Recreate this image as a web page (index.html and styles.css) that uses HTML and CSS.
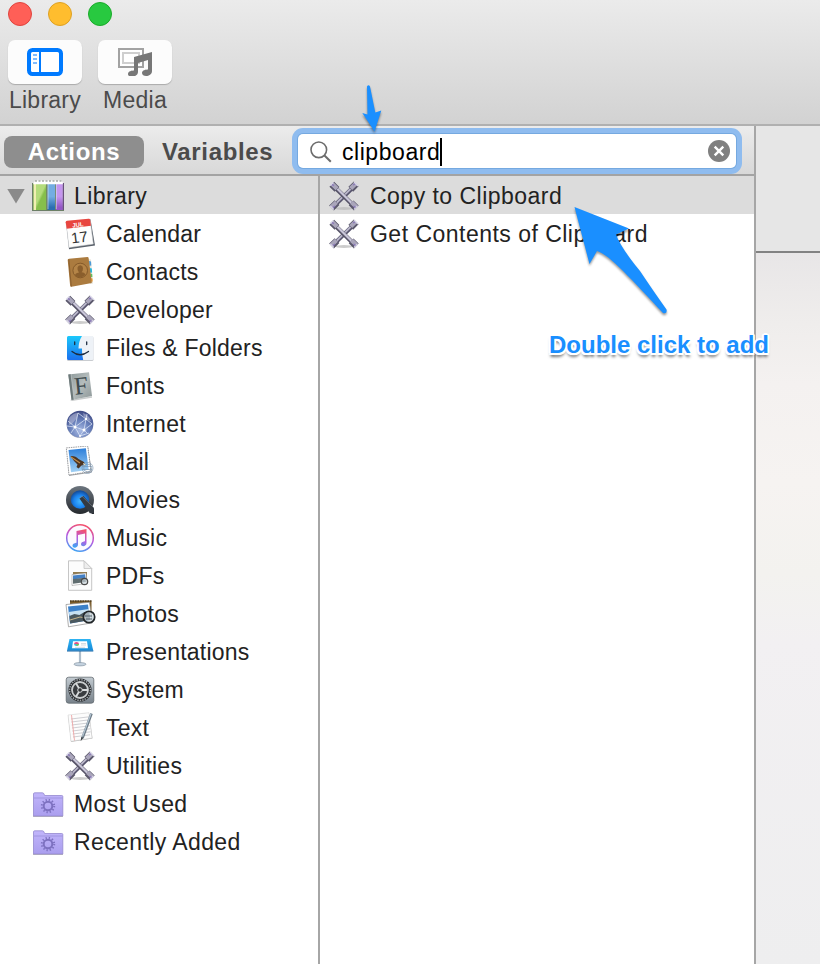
FILE: index.html
```html
<!DOCTYPE html>
<html lang="en">
<head>
<meta charset="utf-8">
<title>Automator</title>
<link rel="stylesheet" href="styles.css">
</head>
<body>
<svg class="defs" aria-hidden="true">
  <defs>
    <linearGradient id="green" x1="0" y1="0" x2="1" y2="1"><stop offset=".5" stop-color="#b4dc7c"/><stop offset=".6" stop-color="#86bf4c"/></linearGradient>
    <linearGradient id="blue" x1="0" y1="0" x2="0" y2="1"><stop offset=".5" stop-color="#73ade2"/><stop offset=".9" stop-color="#2b6eb2"/></linearGradient>
    <linearGradient id="purple" x1="0" y1="0" x2="0" y2="1"><stop offset=".5" stop-color="#c596ee"/><stop offset=".9" stop-color="#9557c6"/></linearGradient>
    <linearGradient id="finder" x1="0" y1="0" x2="0" y2="1"><stop offset="0" stop-color="#1bc8fb"/><stop offset="1" stop-color="#1b70ef"/></linearGradient>
    <linearGradient id="book" x1="0" y1="0" x2="1" y2="1"><stop offset="0" stop-color="#8b9798"/><stop offset=".5" stop-color="#b5bdbd"/><stop offset="1" stop-color="#8c9697"/></linearGradient>
    <radialGradient id="globe" cx=".5" cy=".75" r=".75"><stop offset="0" stop-color="#a9bbe4"/><stop offset=".5" stop-color="#6880bb"/><stop offset="1" stop-color="#3f4a83"/></radialGradient>
    <linearGradient id="sky" x1="0" y1="0" x2="0" y2="1"><stop offset="0" stop-color="#2d7fda"/><stop offset="1" stop-color="#a3d2f5"/></linearGradient>
    <linearGradient id="dark" x1="0" y1="0" x2="0" y2="1"><stop offset="0" stop-color="#6c757e"/><stop offset="1" stop-color="#25292e"/></linearGradient>
    <radialGradient id="lens" cx=".5" cy=".6" r=".55"><stop offset="0" stop-color="#45b6ff"/><stop offset=".6" stop-color="#1a83ef"/><stop offset="1" stop-color="#154f9e"/></radialGradient>
    <linearGradient id="tune" x1=".6" y1="0" x2=".3" y2="1"><stop offset="0" stop-color="#f4506d"/><stop offset=".5" stop-color="#b55ae0"/><stop offset="1" stop-color="#3fa4f3"/></linearGradient>
    <linearGradient id="screen" x1="0" y1="0" x2="0" y2="1"><stop offset="0" stop-color="#2fb4f2"/><stop offset="1" stop-color="#168bd9"/></linearGradient>
    <linearGradient id="plate" x1="0" y1="0" x2="0" y2="1"><stop offset="0" stop-color="#c3cbd1"/><stop offset="1" stop-color="#77818a"/></linearGradient>
    <linearGradient id="folder" x1="0" y1="0" x2="0" y2="1"><stop offset="0" stop-color="#c1b5fb"/><stop offset="1" stop-color="#aa9eee"/></linearGradient>

    <symbol id="i-library" viewBox="0 0 32 32">
      <path d="M0 3h32v28h-32z" fill="#6c7f66"/>
      <path d="M1.500 3 3.500.5h26L31 3z" fill="#fff"/>
      <path d="M3 1h27" stroke="#7c837a" stroke-dasharray="2 1.500"/>
      <path d="M1.300 3h12.900v27h-12.900z" fill="url(#green)"/>
      <path d="M2 3h2v27h-2z" fill="#f1efb1"/>
      <path d="M15.700 3h7.300v27h-7.300z" fill="url(#blue)"/>
      <path d="M24 3h6.800v27h-6.800z" fill="url(#purple)"/>
      <path d="M16 3v26M24.300 3v26" stroke="#d8eafa" stroke-width=".6"/>
      <path d="M1.300 3.500h29.500" stroke="#fff" stroke-width="1.500"/>
      <path d="M31.500 3v27" stroke="#68517a"/>
    </symbol>
    <symbol id="i-calendar" viewBox="0 0 32 32">
      <path d="M2 4 26.500 1.200 31 27.500 5 31.200z" fill="#59606a"/>
      <path d="M2 4 26 1.200 29.300 26 5 29.500z" fill="#fdfdfd" stroke="#d0d2d5" stroke-width=".5"/>
      <path d="M1.700 4.300Q1.600 3 3 2.800L24.500.8Q26 .7 26.200 2L27 7.700 2.700 10.700z" fill="#e8453f"/>
      <text x="14" y="8.800" class="cal-month" transform="rotate(-6 14 8)">JUL</text>
      <text x="15.500" y="24.500" class="cal-day" transform="rotate(-7 15 20)">17</text>
    </symbol>
    <symbol id="i-contacts" viewBox="0 0 32 32">
      <path d="m24 3 3 .5 2 24-3 .5z" fill="#e7e4da"/>
      <path d="m25 5 2 .4.300 4-2 .3z" fill="#4d9bd8"/><path d="m25.800 12 2 .4.300 4-2 .3z" fill="#28b7dc"/><path d="m26.200 17.500 2 .4.200 3-2 .3z" fill="#67c05c"/><path d="m26.500 22 2 .4.200 3-2 .3z" fill="#ed9b36"/>
      <path d="M3.700 4Q3.600 3 5 2.800L23.500 1Q24.500 1 24.600 2L27.800 27 7.500 30.700Q6.300 31 6.100 29.500z" fill="#ab7b3f"/>
      <path d="m4.800 3.500 2.500 27" stroke="#82572a" stroke-width=".8"/>
      <circle cx="16.200" cy="14.500" r="7.300" fill="#b48447" stroke="#805627" stroke-width=".9"/>
      <path d="M11 19.500Q11 17 15 16.500q-2-2-1.500-5 1-2.500 3-2.300 2.500.3 2.500 3t-1.500 4q3.500.3 4 2.800-5 4.500-10.500.5z" fill="#8a5e2c"/>
    </symbol>
    <symbol id="i-tools" viewBox="0 0 32 32">
      <ellipse cx="16" cy="28.500" rx="9" ry="1.500" fill="#bbb" opacity=".75"/>
      <path d="M5 27 27 5.500" stroke="#55526c" stroke-width="4"/>
      <path d="M5 26.500 26.500 5" stroke="#b9b6c9" stroke-width="1.800"/>
      <path d="M5 5.500 27 27" stroke="#565367" stroke-width="4.400"/>
      <path d="M5.500 4.900 27 26.400" stroke="#c9c6d9" stroke-width="2.200"/>
      <g stroke="#5b586c" stroke-width="6.800"><path d="m3.500 28 5.500-5.400M22.800 9.200l5.400-5.300M3.800 4.300l5.200 5.100M23.100 22.900l5.200 5.100"/></g>
      <g stroke="#aaa6bb" stroke-width="4.200"><path d="m3.200 27.200 5.200-5M22.700 8.500l4.900-4.800M4 3.900l5.100 4.800M23.500 22.200l5 4.800"/></g>
      <path d="m2.300 5.500 3-3M26 2l4 4M2.300 26l3.500 3.500M26 29.500l3.500-3.500" stroke="#d8d5e8" stroke-width="1.200"/>
      <path d="m4 4.700 2 1M25 5l2-1M5 27.500l2-1.500M25.500 26l2 1.500" stroke="#8a78ba" stroke-width="1.300"/>
    </symbol>
    <symbol id="i-files" viewBox="0 0 32 32">
      <rect x="3" y="4.500" width="26.500" height="24.500" rx="1.500" fill="#c9ccd0"/>
      <rect x="3" y="4" width="26.500" height="24" rx="1.500" fill="#eef2f7"/>
      <path d="M4.500 4H18q-3.300 5-3.500 12.500h3.500q-.3 6 1.200 11.500H4.500Q3 28 3 26.500v-21Q3 4 4.500 4z" fill="url(#finder)"/>
      <path d="M10.700 10v2.500M22.700 10v2.500M8 19.500q8 6.500 16.500 0" fill="none" stroke="#1d2c40" stroke-width="1.300" stroke-linecap="round"/>
    </symbol>
    <symbol id="i-fonts" viewBox="0 0 32 32">
      <path d="m6 30 22-3.800v1.600L8 31z" fill="#c9cccc"/>
      <path d="M4.300 4.500 25 2.300 28 26 7.500 30z" fill="url(#book)"/>
      <path d="M4.300 4.500 7 4.200 10 29.500 7.500 30z" fill="#6d797a"/>
      <path d="M7 4.200 10 29.500" stroke="#ced4d4" stroke-width=".6"/>
      <text x="17" y="24" class="font-letter" transform="rotate(-6 17 16)">F</text>
    </symbol>
    <symbol id="i-internet" viewBox="0 0 32 32">
      <circle cx="16" cy="16.500" r="13.300" fill="#aeb3c2"/><circle cx="16" cy="16" r="13.300" fill="url(#globe)"/>
      <path d="M5 10q4-5 9-5l-1 5-5 6-3 1zM19 5q6 2 8 8l-3-1-4-3z" fill="#c6c8df" opacity=".5"/>
      <path d="m4 13 7 6 11-8 6 5-8 6-9-3 5 9 4-6 3 3M11 19 14 5l8 6 1-5M3 18l8 1-4 6M20 22l2-11M16 28l9-3" fill="none" stroke="#e7effc" stroke-width=".7"/>
      <g fill="#fff"><circle cx="11" cy="19" r="1.500"/><circle cx="22" cy="11" r="1.200"/><circle cx="20" cy="22" r="1.500"/><circle cx="16" cy="28" r="1"/></g>
    </symbol>
    <symbol id="i-mail" viewBox="0 0 32 32">
      <path d="M2.500 2.500 24 .5 28 26.500 5 30z" fill="#a6a9ad"/>
      <path d="M2.300 1.900 23.700 0 27 25.500 5 29z" fill="#fff" stroke="#85888c" stroke-width=".8" stroke-dasharray="1.500 .8"/>
      <path d="m4.500 4 17.400-1.800 2.800 21.500L7 26.300z" fill="url(#sky)"/>
      <path d="M6.500 10q5-.5 8 3l5.500 3 1.500 3-4 .5-3 3-2-1.500 1-2.500q-4-3.500-7-8.500z" fill="#4c3524"/>
      <path d="m7 11 6 4 3 2" stroke="#c48c46" stroke-width="1.200" fill="none"/><path d="m19 17 3 1-2 2z" fill="#eee4be"/>
      <g fill="none" stroke="#7793ae" stroke-width=".8" opacity=".8"><circle cx="23.500" cy="22" r="5.500"/><circle cx="23.500" cy="22" r="3.800"/><path d="M18 20.500h10M18 23.500h10"/></g>
    </symbol>
    <symbol id="i-movies" viewBox="0 0 32 32">
      <circle cx="16" cy="16" r="14" fill="url(#dark)"/><path d="M17 17 28 30h2v-5l-9-10z" fill="#292d32"/>
      <circle cx="16" cy="15.500" r="9.300" fill="url(#lens)"/>
      <path d="m15.500 14.500 4-2.500 10.300 12v5.300h-4z" fill="#343a41"/>
      <path d="m15.500 14.500 2.500-2.300L30 24" fill="none" stroke="#7b858e" stroke-width=".6"/>
    </symbol>
    <symbol id="i-music" viewBox="0 0 32 32">
      <circle cx="16" cy="16" r="13.300" fill="#fcfaff" stroke="url(#tune)" stroke-width="1.500"/>
      <path d="M12.500 9 22.500 7v14c0 3.800-5.500 4.100-5.500 1.200 0-2.300 3-2.700 4-3V11.500L14 13v9.500c0 3.800-5.500 4.100-5.500 1.200 0-2.300 3-2.700 4-3z" fill="url(#tune)"/>
    </symbol>
    <symbol id="i-pdfs" viewBox="0 0 32 32">
      <path d="M4.500.8H20l7.700 7.700v21.800H4.500z" fill="#fcfcfc" stroke="#b8b8b8" stroke-width=".8"/>
      <path d="M20 .8V8.500h7.700z" fill="#ededed" stroke="#c4c4c4" stroke-width=".8"/>
      <path d="M9 12h14v10H9z" fill="#927b4e"/><path d="M8 14.500 22 13l1 10.500-15 2z" fill="#fff" stroke="#8b8b8b" stroke-width=".5"/>
      <path d="M9 15.500 21 14.300l.5 4-12.500 1z" fill="#4580c4"/><path d="m9 19 12.500-1.200.4 4.200L9 23.700z" fill="#606d70"/>
      <circle cx="20.500" cy="21.500" r="3.200" fill="#cad4da" fill-opacity=".65" stroke="#494949" stroke-width="1.200"/>
    </symbol>
    <symbol id="i-photos" viewBox="0 0 32 32">
      <path d="M6 2.500h21.500V19H6z" fill="#7b5b28"/><path d="M6 3h21.500" stroke="#302819" stroke-dasharray="1.500 1"/>
      <path d="m2 6.500 23.500-2.200 3 20.500-24 4z" fill="#fff" stroke="#8c8c8c" stroke-width=".7"/>
      <path d="m4 8.500 20-2 2 15.500L6 25.500z" fill="#3c80c8"/><path d="m4.800 14 20-3 .6 5L6 20z" fill="#c6e1f3"/>
      <path d="m5.400 18 5-2 5 1 5-3 5 1 .8 7-20 3.500z" fill="#4b5960"/>
      <path d="m6 22 10-3 6 1" stroke="#c5b48a" fill="none"/>
      <circle cx="25" cy="19" r="5.700" fill="#cbd7de" fill-opacity=".7" stroke="#22272a" stroke-width="1.700"/>
      <path d="M21 18h7M22 21h6" stroke="#53616a"/>
    </symbol>
    <symbol id="i-presentations" viewBox="0 0 32 32">
      <path d="M16 15v12.500" stroke="#aebdcb" stroke-width="2.200"/>
      <ellipse cx="16" cy="28.200" rx="6" ry="1.700" fill="#c4d2df" stroke="#7e8d9b" stroke-width=".6"/>
      <path d="M5.500 3h21l2.800 11.700H3z" fill="url(#screen)"/><path d="M3 14.500h26.300v1H3z" fill="#1262a4"/>
      <path d="M9 5.300h14l1 7H8z" fill="#fff"/><path d="M10 8a2.500 2 0 1 0 5 0" fill="#35b9df"/><path d="M10 8a2.500 2 0 0 1 5 0z" fill="#e44e85"/><path d="M12.500 8h2.500a2.500 2 0 0 1-2.500 2z" fill="#7ec94d"/><path d="M17 7.500h5M17 9h5M11 11.300h10" stroke="#b7c4cf" stroke-width=".6"/>
    </symbol>
    <symbol id="i-system" viewBox="0 0 32 32">
      <rect x="2.200" y="3.200" width="27.600" height="26" rx="2.500" fill="url(#plate)" stroke="#626a70" stroke-width=".8"/>
      <circle cx="16" cy="16" r="11.500" fill="#242629"/>
      <circle cx="16" cy="16" r="10.400" fill="none" stroke="#9ba1a5" stroke-width="1.500" stroke-dasharray="1.500 1"/>
      <circle cx="16" cy="16" r="8" fill="#393c3f" stroke="#cacdce" stroke-width="1.800"/>
      <path d="M16 16h8M16 16l-4-6.800M16 16l-4 6.800" stroke="#d7dadb" stroke-width="1.800"/><circle cx="16" cy="16" r="2.300" fill="#303234" stroke="#d7dadb"/>
    </symbol>
    <symbol id="i-text" viewBox="0 0 32 32">
      <path d="M4 3.500 25 1l3.500 25.500L7 30z" fill="#bbb"/><path d="M4 3 25 .7 28 26 7 29.300z" fill="#fcfcfc" stroke="#ccc" stroke-width=".5"/>
      <path d="m7 7 18-2.200M7.300 10l18-2.200M7.700 13l18-2.200M8 16l18-2.200M8.300 19l18-2.200M8.700 22l18-2.200M9 25l17-2.200" stroke="#bcbcc2" stroke-width=".7"/><path d="m7.500 3 3 25.500" stroke="#ee9a9a" stroke-width=".8"/>
      <path d="M27.500 1.500 18.500 26" stroke="#6b7985" stroke-width="2.600"/><path d="M27 1.500 18.500 24.500" stroke="#b4c5d2" stroke-width="1.200"/><path d="m17.300 25-.6 4 2.600-3z" fill="#353b40"/>
    </symbol>
    <symbol id="i-smart" viewBox="0 0 32 32">
      <path d="M1 28.500h30" stroke="#aaa" stroke-width=".8"/>
      <path d="M1.500 6Q1.500 4.800 2.700 4.800h7.500q1.400 0 1.800 1.200l.6 1.500h17.200q1 0 1 1V28h-29.300z" fill="url(#folder)" stroke="#9489ce" stroke-width=".8"/>
      <path d="M2 10h28.500" stroke="#9b90d9" stroke-width=".8"/>
      <circle cx="16" cy="18" r="4.300" fill="none" stroke="#7d71c0" stroke-width="2"/><circle cx="16" cy="18" r="6.200" fill="none" stroke="#7d71c0" stroke-width="2" stroke-dasharray="1.300 1.946"/>
    </symbol>
  </defs>
</svg>

<div class="window">
  <header class="toolbar">
    <div class="lights"><i class="light red"></i><i class="light yellow"></i><i class="light green"></i></div>
    <div class="tools">
      <div class="tool">
        <div class="tool-face"><svg width="36" height="28" viewBox="0 0 36 28"><rect x="2" y="2" width="32" height="24" rx="3.500" fill="#fff" stroke="#007aff" stroke-width="4"/><path d="M13 2v24" stroke="#007aff" stroke-width="2"/><path d="M6 7h4M6 11h4M6 15h4" stroke="#80bcff" stroke-width="2"/></svg></div>
        <span>Library</span>
      </div>
      <div class="tool">
        <div class="tool-face"><svg width="36" height="28" viewBox="0 0 36 28"><path d="M2 1h24v18H2z" fill="#fff" stroke="#a2a2a2" stroke-width="2"/><path d="M6 5h16v10H6z" fill="#fff" stroke="#cfcfcf" stroke-width="2"/><path d="M17 9 35 4v19c0 6-10 6.500-10 2 0-3 4-3.500 6-3.500V12l-10 3v9c0 5.500-10 6-10 2 0-3 4-3.500 6-3.500z" fill="#777"/></svg></div>
        <span>Media</span>
      </div>
    </div>
  </header>

  <div class="body">
    <section class="library">
      <div class="filter-bar">
        <div class="tab selected">Actions</div>
        <div class="tab">Variables</div>
        <div class="search">
          <svg class="glass" width="22" height="22" viewBox="0 0 22 22"><circle cx="8.800" cy="8.800" r="7.800" fill="none" stroke="#6c6c6c" stroke-width="1.600"/><path d="m14.500 14.500 6.300 6.300" stroke="#6c6c6c" stroke-width="2"/></svg>
          <span class="query">clipboard</span><i class="caret"></i>
          <svg class="clear" width="22" height="22" viewBox="0 0 22 22"><circle cx="11" cy="11" r="11" fill="#808080"/><path d="m6.700 6.700 8.600 8.600M15.300 6.700l-8.600 8.600" stroke="#fff" stroke-width="2.400"/></svg>
        </div>
      </div>
      <div class="columns">
        <ul class="sources">
          <li class="row top current"><i class="disclosure"></i><svg class="icon"><use href="#i-library"/></svg>Library</li>
          <li class="row"><svg class="icon"><use href="#i-calendar"/></svg>Calendar</li>
          <li class="row"><svg class="icon"><use href="#i-contacts"/></svg>Contacts</li>
          <li class="row"><svg class="icon"><use href="#i-tools"/></svg>Developer</li>
          <li class="row"><svg class="icon"><use href="#i-files"/></svg>Files &amp; Folders</li>
          <li class="row"><svg class="icon"><use href="#i-fonts"/></svg>Fonts</li>
          <li class="row"><svg class="icon"><use href="#i-internet"/></svg>Internet</li>
          <li class="row"><svg class="icon"><use href="#i-mail"/></svg>Mail</li>
          <li class="row"><svg class="icon"><use href="#i-movies"/></svg>Movies</li>
          <li class="row"><svg class="icon"><use href="#i-music"/></svg>Music</li>
          <li class="row"><svg class="icon"><use href="#i-pdfs"/></svg>PDFs</li>
          <li class="row"><svg class="icon"><use href="#i-photos"/></svg>Photos</li>
          <li class="row"><svg class="icon"><use href="#i-presentations"/></svg>Presentations</li>
          <li class="row"><svg class="icon"><use href="#i-system"/></svg>System</li>
          <li class="row"><svg class="icon"><use href="#i-text"/></svg>Text</li>
          <li class="row"><svg class="icon"><use href="#i-tools"/></svg>Utilities</li>
          <li class="row top"><svg class="icon"><use href="#i-smart"/></svg>Most Used</li>
          <li class="row top"><svg class="icon"><use href="#i-smart"/></svg>Recently Added</li>
        </ul>
        <ul class="results">
          <li class="row current"><svg class="icon"><use href="#i-tools"/></svg>Copy to Clipboard</li>
          <li class="row"><svg class="icon"><use href="#i-tools"/></svg>Get Contents of Clipboard</li>
        </ul>
      </div>
    </section>
    <section class="workflow"><div class="workflow-head"></div><div class="canvas"></div></section>
  </div>

  <svg class="arrows" width="820" height="400" viewBox="0 0 820 400">
    <path d="M367 86.500Q368.500 84 370 86.500L375.300 112.500 381.300 110.500 374.500 131.500 362.300 113 367.500 114.500z"/>
    <path d="M574.500 207 629 228.500 616 234.500Q621 248 640 271 652 289 666.500 309.500 667.500 314 663 313C634 282 609 254 597 251L589.500 264z"/>
  </svg>
  <div class="note">Double click to add</div>
</div>
</body>
</html>
```
FILE: styles.css
```css
* { box-sizing: border-box; }
body { margin: 0; font-family: "Liberation Sans", Arial, sans-serif; font-size: 23px; color: #222; }
.defs { position: absolute; width: 0; height: 0; }
.window { position: relative; width: 820px; height: 964px; overflow: hidden; display: flex; flex-direction: column; background: #fff; }

.toolbar { height: 126px; padding: 2px 8px 0; background: linear-gradient(#ebebeb, #d2d2d2); border-bottom: 2px solid #b0b0b0; }
.lights { display: flex; gap: 16px; height: 38px; }
.light { width: 24px; height: 24px; border-radius: 50%; border: 1px solid; }
.red { background: #ff5f57; border-color: #e0443e; }
.yellow { background: #ffbd2e; border-color: #dea123; }
.green { background: #28c940; border-color: #1aab29; }
.tools { display: flex; gap: 16px; }
.tool { width: 74px; display: flex; flex-direction: column; align-items: center; color: #4b4b4b; letter-spacing: .25px; line-height: 33px; }
.tool-face { width: 74px; height: 44px; border-radius: 7px; background: #fcfcfc; box-shadow: 0 1px 1px #aaa; display: flex; align-items: center; justify-content: center; }

.body { flex: 1; display: flex; min-height: 0; }
.library { width: 756px; border-right: 2px solid #a6a6a6; display: flex; flex-direction: column; }
.filter-bar { height: 50px; border-bottom: 2px solid #a3a3a3; background: linear-gradient(#ececec, #d8d8d8); display: flex; align-items: center; padding-left: 4px; padding-top: 2px; }
.tab { font-weight: bold; font-size: 24px; letter-spacing: .65px; color: #4b4b4b; height: 32px; line-height: 31px; width: 154px; margin-top: 2px; padding-left: 18px; }
.tab.selected { width: 140px; padding: 0; text-align: center; background: #8e8e8e; color: #fff; border-radius: 8px; }
.search { width: 438px; height: 34px; background: #fff; border-radius: 5px; box-shadow: 0 0 0 1px #75a9e0, 0 0 0 6px #8fbcef; display: flex; align-items: center; padding: 2px 6px 0 12px; color: #000; }
.query { margin-left: 10px; font-size: 23px; letter-spacing: .55px; line-height: 32px; }
.caret { width: 2px; height: 28px; background: #000; }
.clear { margin: 0 0 2px auto; }

.columns { flex: 1; display: flex; }
.sources, .results { list-style: none; margin: 0; padding: 0; }
.sources { width: 318px; }
.results { flex: 1; border-left: 2px solid #a6a6a6; }
.row { height: 38px; padding: 2px 0 0 64px; display: flex; align-items: center; letter-spacing: .22px; white-space: nowrap; }
.row.top { padding-left: 32px; letter-spacing: .4px; }
.results .row { padding-left: 8px; letter-spacing: .48px; }
.current { background: #dcdcdc; }
.icon { width: 32px; height: 32px; margin-right: 10px; flex: none; }
.disclosure { width: 18px; height: 15px; margin: 0 7px 0 -25px; background: #8a8a8a; clip-path: polygon(0 0, 100% 0, 50% 100%); }
.cal-month { font-size: 6px; font-weight: bold; text-anchor: middle; fill: #fff; letter-spacing: 0; }
.cal-day { font-size: 15px; text-anchor: middle; fill: #333; letter-spacing: 0; }
.font-letter { font-family: "Liberation Serif", serif; font-size: 25px; text-anchor: middle; fill: #3f4b4f; letter-spacing: 0; }

.workflow { flex: 1; display: flex; flex-direction: column; }
.workflow-head { height: 127px; background: #e6e6e6; border-bottom: 2px solid #828282; }
.canvas { flex: 1; background: linear-gradient(#e8e6e7, #efedec 70px, #f4f1f0 130px, #f6f3f1 230px, #f3f2ef 320px, #f2f0f2 390px, #eeeeef); }

.arrows { position: absolute; left: 0; top: 0; fill: #1a8fff; filter: drop-shadow(0 2px 1px rgba(0, 0, 0, .4)); }
.note { position: absolute; left: 549px; top: 331px; font-size: 24px; font-weight: bold; line-height: 28px; color: #1a8fff; white-space: nowrap; text-shadow: -2px 0 #fff, 2px 0 #fff, 0 -2px #fff, 0 2px #fff, -1.500px -1.500px #fff, 1.500px -1.500px #fff, -1.500px 1.500px #fff, 1.500px 1.500px #fff, 0 4px 3px rgba(0, 0, 0, .55); }
```
